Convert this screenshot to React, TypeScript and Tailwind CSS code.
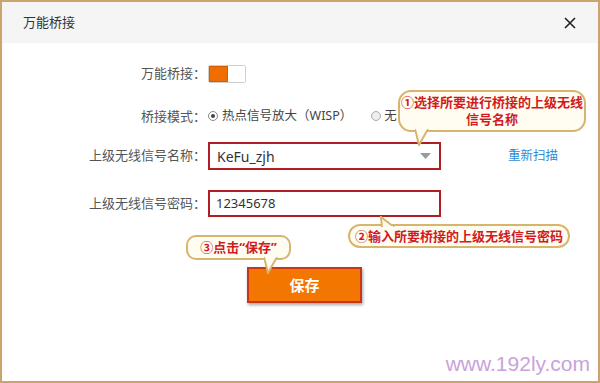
const FONT = { fontFamily: '"Noto Sans", "Noto Sans CJK SC", sans-serif' };

function Callout({
  className,
  tail,
  children,
}: {
  className: string;
  tail: { side: 'top' | 'bottom'; left: number };
  children: React.ReactNode;
}) {
  return (
    <div className={`absolute border-2 border-[#d8b56c] bg-[#fffdf2] flex flex-col items-center justify-center whitespace-nowrap text-center text-[13px] font-bold leading-[19px] text-[#d11b22] ${className}`}>
      {children}
      {tail.side === 'bottom' ? (
        <svg className="absolute -bottom-[16px]" style={{ left: tail.left }} width="16" height="17" viewBox="0 0 16 17">
          <path d="M0 0 L4 16 L13 0" fill="#fffdf2" stroke="#d8b56c" strokeWidth="2" />
          <rect x="1" y="-2" width="11" height="3" fill="#fffdf2" />
        </svg>
      ) : (
        <svg className="absolute -top-[10px]" style={{ left: tail.left }} width="16" height="11" viewBox="0 0 16 11">
          <path d="M2 11 L1 1 L14 11" fill="#fffdf2" stroke="#d8b56c" strokeWidth="2" />
          <rect x="3" y="10" width="10" height="3" fill="#fffdf2" />
        </svg>
      )}
    </div>
  );
}

function Row({ label, children, className }: { label: string; children: React.ReactNode; className?: string }) {
  return (
    <div className={`flex items-center ${className ?? ''}`}>
      <div className="w-[204px] text-right text-[13px] text-[#555]">{label}</div>
      <div className="ml-[2px] flex items-center">{children}</div>
    </div>
  );
}

export default function App() {
  return (
    <div style={FONT} className="relative w-[600px] h-[383px] overflow-hidden border-2 border-[#c9a56d] bg-white">
      <div className="flex h-[41px] items-center justify-between bg-[#f5f5f5] pl-[21px] pr-[22px]">
        <span className="text-[13px] text-[#333]">万能桥接</span>
        <svg width="12" height="12" viewBox="0 0 12 12">
          <path d="M1 1 L11 11 M11 1 L1 11" stroke="#222" strokeWidth="1.6" />
        </svg>
      </div>

      <div className="flex flex-col">
        <Row label="万能桥接：" className="mt-[21px]">
          <div className="flex h-[18px] w-[38px] overflow-hidden rounded-[2px] border border-[#cfcfcf]">
            <div className="w-[19px] bg-[#f26d00] border border-[#d55f00]" />
            <div className="flex-1 bg-white" />
          </div>
        </Row>

        <Row label="桥接模式：" className="mt-[23px]">
          <span className="mr-[4px] flex h-[10px] w-[10px] items-center justify-center rounded-full border border-[#888]">
            <span className="h-[4px] w-[4px] rounded-full bg-[#444]" />
          </span>
          <span className="text-[12.5px] text-[#444]">热点信号放大（WISP）</span>
          <span className="ml-[19px] mr-[3px] h-[10px] w-[10px] rounded-full border border-[#aaa] bg-[#eee]" />
          <span className="text-[12.5px] text-[#444]">无</span>
        </Row>

        <Row label="上级无线信号名称：" className="mt-[16px]">
          <div className="flex h-[28px] w-[233px] items-center justify-between border-2 border-[#b01e24] bg-white pl-[7px] pr-[8px]">
            <span className="text-[14px] text-[#333]">KeFu_zjh</span>
            <svg width="11" height="6" viewBox="0 0 11 6">
              <path d="M0 0 L11 0 L5.5 6 Z" fill="#9a9a9a" />
            </svg>
          </div>
          <span className="ml-[67px] text-[12.5px] text-[#2f8bd3]">重新扫描</span>
        </Row>

        <Row label="上级无线信号密码：" className="mt-[20px]">
          <div className="flex h-[27px] w-[233px] items-center border-2 border-[#b01e24] bg-white pl-[6px]">
            <span className="text-[13px] text-[#333]">12345678</span>
          </div>
        </Row>

        <div className="mt-[50px] flex pl-[245px]">
          <button className="flex h-[36px] w-[115px] items-center justify-center border-2 border-[#c8351a] bg-[#f27600] text-[15px] font-bold text-white shadow-[1px_2px_3px_rgba(0,0,0,0.35)]">
            保存
          </button>
        </div>
      </div>

      <Callout className="left-[396px] top-[88px] h-[42px] w-[188px] rounded-[13px]" tail={{ side: 'bottom', left: 15 }}>
        <div>①选择所要进行桥接的上级无线</div>
        <div className="-mt-[2px]">信号名称</div>
      </Callout>
      <Callout className="left-[346px] top-[222px] h-[24px] w-[222px] rounded-[12px]" tail={{ side: 'top', left: 30 }}>
        <div>②输入所要桥接的上级无线信号密码</div>
      </Callout>
      <Callout className="left-[184px] top-[233px] h-[25px] w-[105px] rounded-[10px]" tail={{ side: 'bottom', left: 76 }}>
        <div>③点击“保存”</div>
      </Callout>

      <div
        className="absolute bottom-[2px] right-[8px] text-[21px] text-[#c9a2da]"
        style={{ fontFamily: '"Liberation Sans", Arial, sans-serif' }}
      >
        www.192ly.com
      </div>
    </div>
  );
}
